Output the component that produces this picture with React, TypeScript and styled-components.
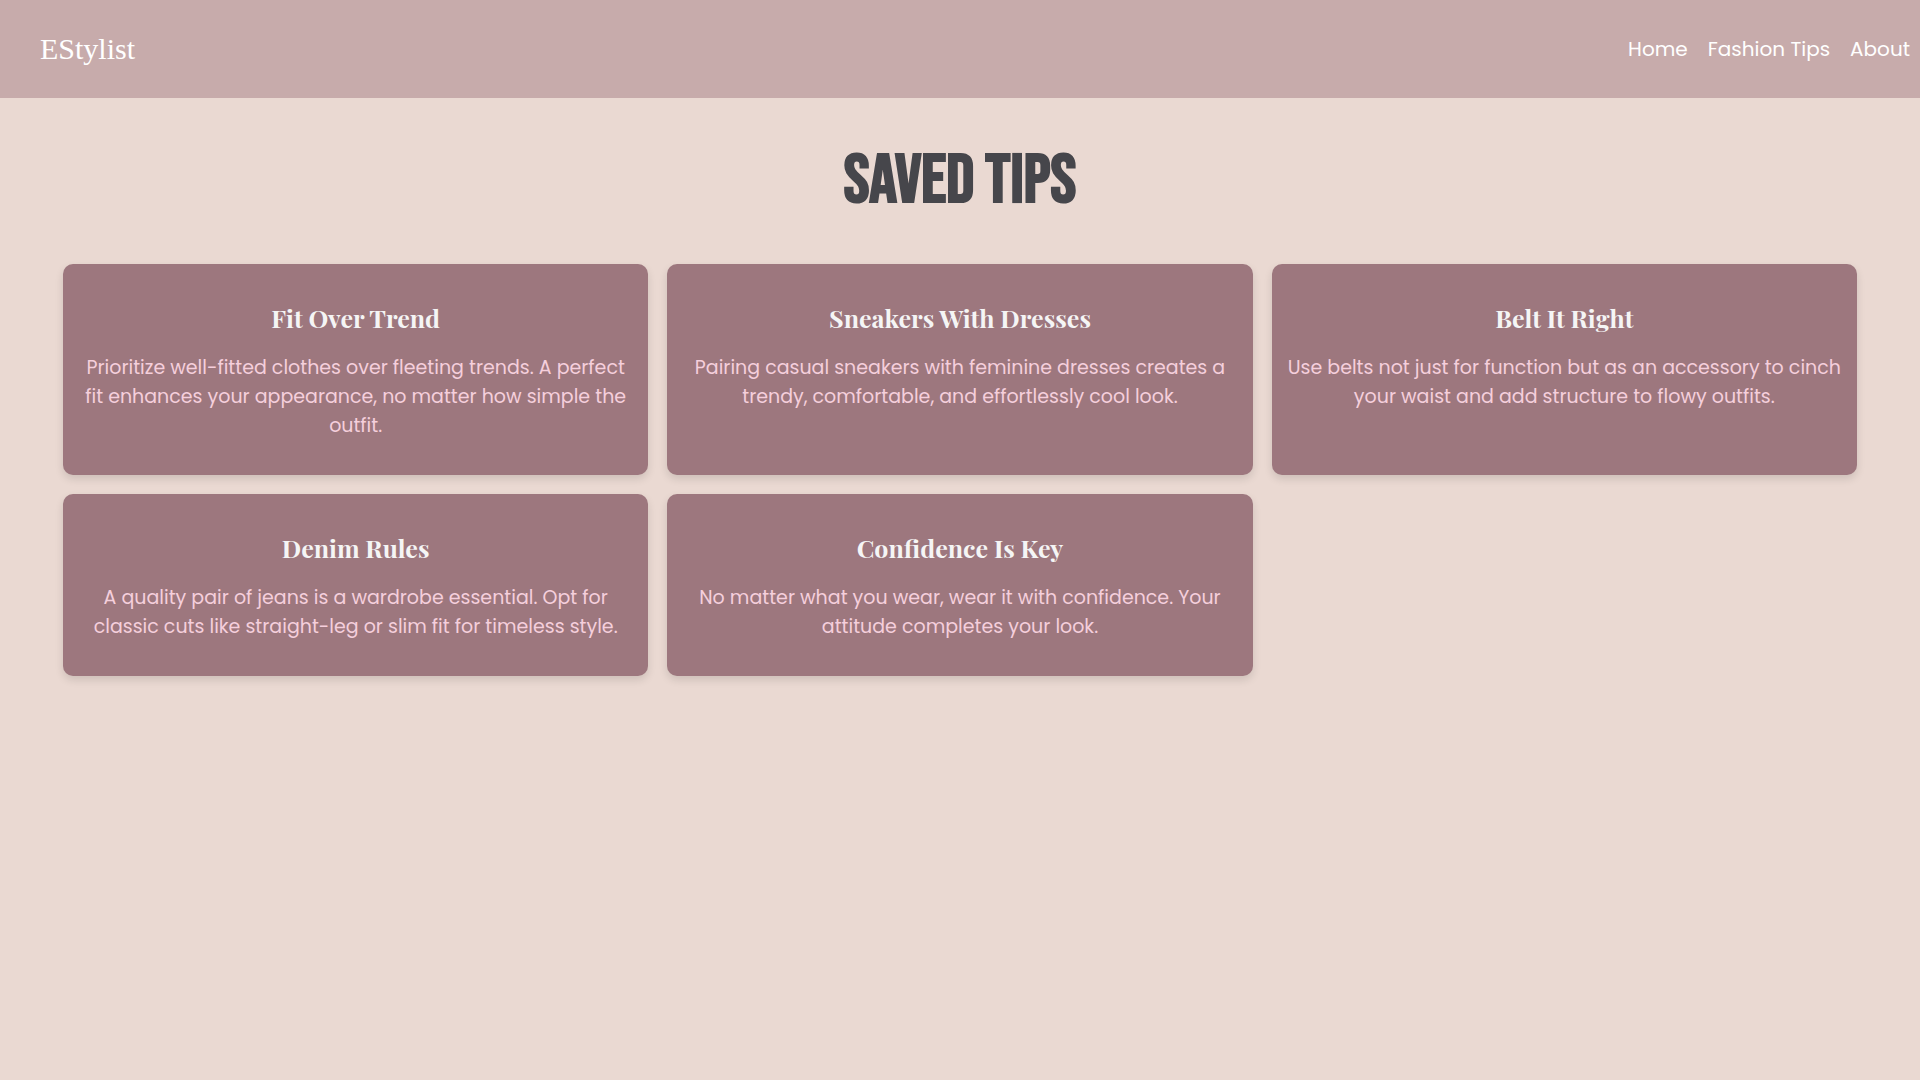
import React from "react";
import styled, { createGlobalStyle } from "styled-components";

const sans = `Poppins, Inter, "Open Sans", sans-serif`;
const serif = `"Liberation Serif", "Times New Roman", serif`;

const GlobalStyle = createGlobalStyle`
  *, *::before, *::after { box-sizing: border-box; }
  body {
    margin: 0;
    background: #ead9d2;
    font-family: ${sans};
  }
`;

const Header = styled.header`
  display: flex;
  align-items: center;
  justify-content: space-between;
  min-height: 98px;
  padding: 0 10px 0 40px;
  background: #c7abab;
`;

const Logo = styled.a`
  color: #fff;
  font-family: ${serif};
  font-size: 30px;
  line-height: 36px;
  text-decoration: none;
`;

const NavList = styled.ul`
  display: flex;
  gap: 20px;
  margin: 0;
  padding: 0;
  list-style: none;
`;

const NavLink = styled.a`
  color: #fff;
  font-size: 20px;
  line-height: 30px;
  text-decoration: none;
`;

const Main = styled.main`
  padding: 40px 63px;
`;

const PageTitle = styled.h1`
  margin: 0 0 38px;
  color: #46464b;
  font-family: "Bebas Neue", "Liberation Sans Narrow", "Liberation Sans", sans-serif;
  font-size: 69px;
  font-weight: 700;
  line-height: 88px;
  text-align: center;
  text-transform: uppercase;
`;

const TipGrid = styled.section`
  display: grid;
  grid-template-columns: repeat(3, minmax(0, 1fr));
  gap: 19px;
`;

const TipCard = styled.article`
  padding: 36px 14px 35px;
  border-radius: 10px;
  background: #9d777e;
  box-shadow: 0 4px 8px rgba(0, 0, 0, 0.12);
  text-align: center;
`;

const TipTitle = styled.h2`
  margin: 0 0 17px;
  color: #f5f5f5;
  font-family: "Playfair Display", ${serif};
  font-size: 25px;
  font-weight: 700;
  line-height: 36px;
`;

const TipText = styled.p`
  margin: 0;
  color: #f5cfdc;
  font-size: 19px;
  line-height: 29px;
`;

const links = ["Home", "Fashion Tips", "About"];

const tips = [
  {
    title: "Fit Over Trend",
    text: "Prioritize well-fitted clothes over fleeting trends. A perfect fit enhances your appearance, no matter how simple the outfit.",
  },
  {
    title: "Sneakers With Dresses",
    text: "Pairing casual sneakers with feminine dresses creates a trendy, comfortable, and effortlessly cool look.",
  },
  {
    title: "Belt It Right",
    text: "Use belts not just for function but as an accessory to cinch your waist and add structure to flowy outfits.",
  },
  {
    title: "Denim Rules",
    text: "A quality pair of jeans is a wardrobe essential. Opt for classic cuts like straight-leg or slim fit for timeless style.",
  },
  {
    title: "Confidence Is Key",
    text: "No matter what you wear, wear it with confidence. Your attitude completes your look.",
  },
];

export default function App() {
  return (
    <>
      <GlobalStyle />
      <Header>
        <Logo href="#">EStylist</Logo>
        <nav aria-label="Main">
          <NavList>
            {links.map((label) => (
              <li key={label}>
                <NavLink href="#">{label}</NavLink>
              </li>
            ))}
          </NavList>
        </nav>
      </Header>
      <Main>
        <PageTitle>Saved Tips</PageTitle>
        <TipGrid>
          {tips.map((tip) => (
            <TipCard key={tip.title}>
              <TipTitle>{tip.title}</TipTitle>
              <TipText>{tip.text}</TipText>
            </TipCard>
          ))}
        </TipGrid>
      </Main>
    </>
  );
}
